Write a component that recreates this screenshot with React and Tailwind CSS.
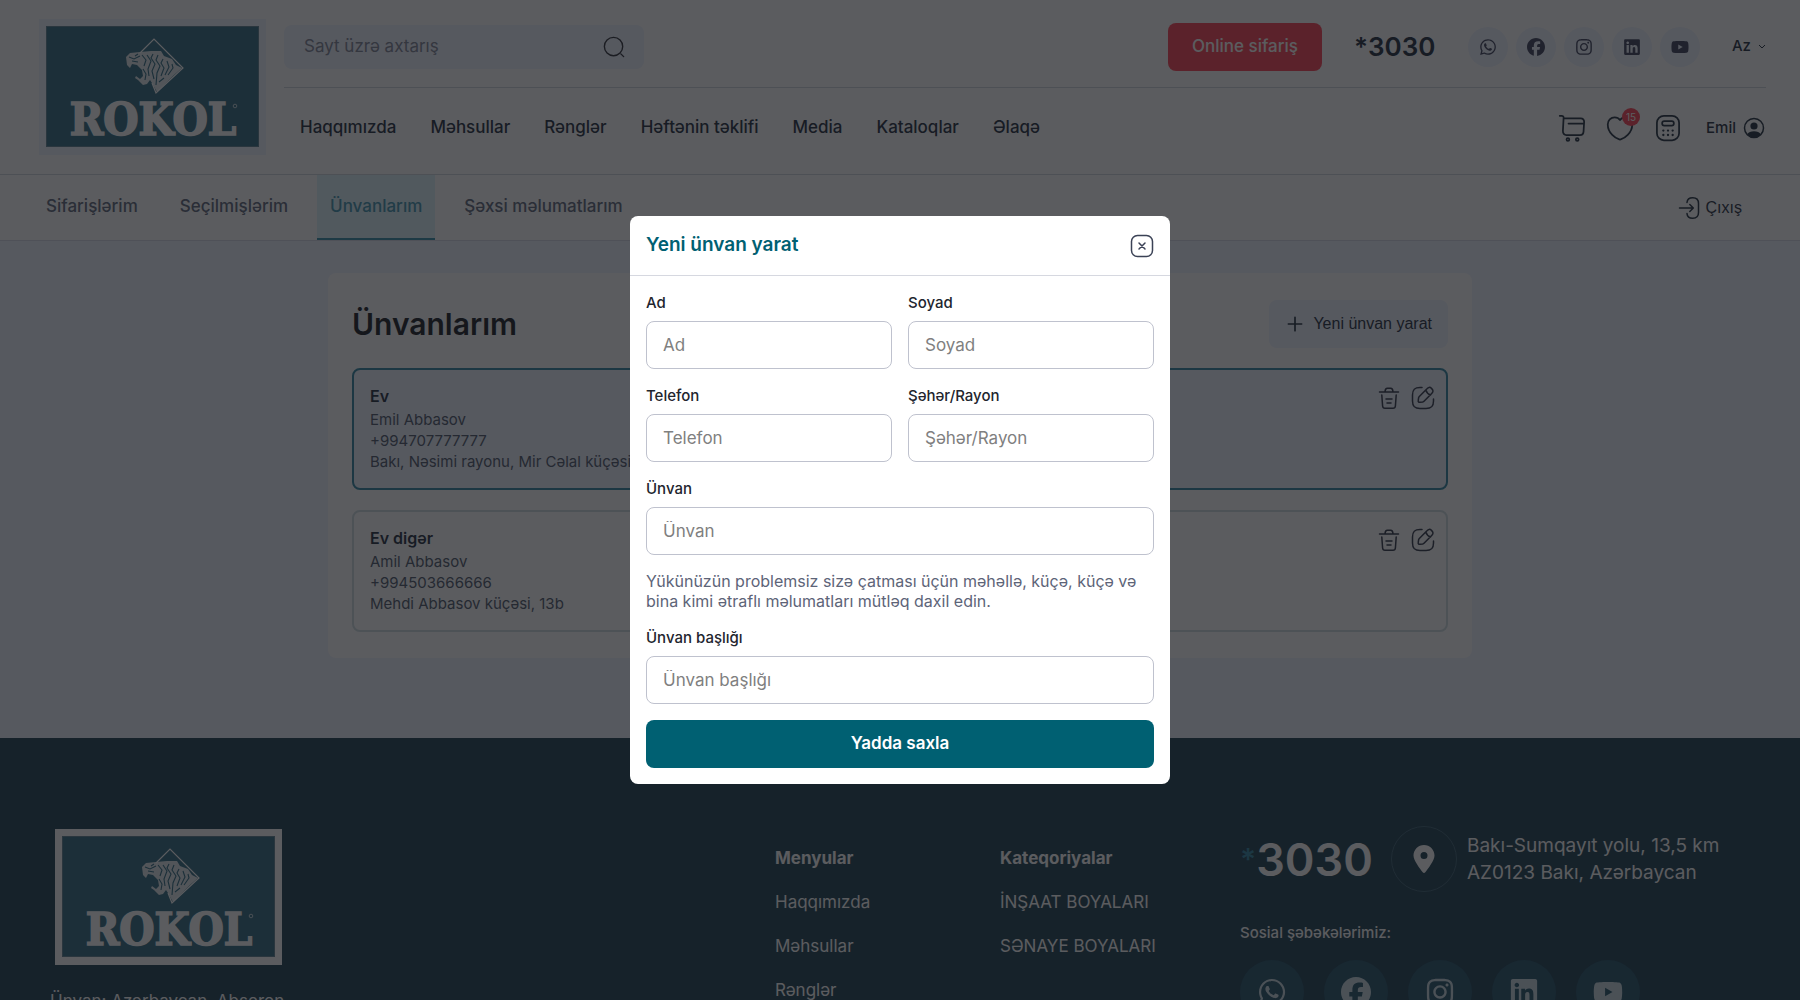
import { useState } from "react";
import { FaWhatsapp, FaFacebook, FaInstagram, FaLinkedin, FaYoutube, FaLocationDot } from "react-icons/fa6";

const navLinks = ["Haqqımızda", "Məhsullar", "Rənglər", "Həftənin təklifi", "Media", "Kataloqlar", "Əlaqə"];
const tabs = ["Sifarişlərim", "Seçilmişlərim", "Ünvanlarım", "Şəxsi məlumatlarım"];

const socials = [
  { name: "WhatsApp", Icon: FaWhatsapp },
  { name: "Facebook", Icon: FaFacebook },
  { name: "Instagram", Icon: FaInstagram },
  { name: "LinkedIn", Icon: FaLinkedin },
  { name: "YouTube", Icon: FaYoutube },
];

const addresses = [
  {
    id: 1,
    title: "Ev",
    name: "Emil Abbasov",
    phone: "+994707777777",
    address: "Bakı, Nəsimi rayonu, Mir Cəlal küçəsi",
    selected: true,
  },
  {
    id: 2,
    title: "Ev digər",
    name: "Amil Abbasov",
    phone: "+994503666666",
    address: "Mehdi Abbasov küçəsi, 13b",
    selected: false,
  },
];

function Logo({ frame }) {
  return (
    <svg viewBox="0 0 227 136" className="block w-[227px] h-[136px]" role="img" aria-label="Rokol">
      <rect width="227" height="136" fill={frame} />
      <rect x="7.5" y="7.5" width="212" height="120" fill="#2c687f" stroke="#5b7f92" />
      <path d="M101 34 L115 20 L144 49 L117 74 L113 64" fill="none" stroke="#fff" strokeWidth="1.2" />
      <path
        d="M87 38 L91 34 L101 33 L112 32 L122 32 L125 37 L133 40 L137 46 L143 49 L135 56 L127 64 L118 73 L113 64 L111 61 L108 65 L104 66 L99 61 L96 59 L97 57 L101 60 L104 57 L103 51 L98 46 L93 45 L91 49 L88 46 Z"
        fill="#fff"
        fillOpacity="0.85"
      />
      <path
        d="M90 38 L95 40 L101 37 M93 42 L99 43 M103 36 L107 41 L105 47 M108 36 L112 42 L109 50 L110 57 M114 35 L112 39 L116 45 L113 52 L115 60 M119 36 L117 41 L121 47 L118 54 L117 66 M124 40 L122 44 L125 49 L122 57 M128 42 L130 48 L126 56 M133 45 L134 49 L129 56 M120 63 L125 59 M104 50 L107 55 L106 61 M96 37 L99 35"
        fill="none"
        stroke="#2c687f"
        strokeWidth="1.1"
      />
      <text
        x="114"
        y="116"
        textAnchor="middle"
        fill="#fff"
        stroke="#fff"
        strokeWidth="1.6"
        fontSize="45"
        fontWeight="700"
        fontFamily='"DejaVu Serif Condensed", "DejaVu Serif", serif'
      >
        ROKOL
      </text>
      <circle cx="196" cy="87" r="1.8" fill="none" stroke="#fff" strokeWidth="0.7" />
    </svg>
  );
}

function Icon({ size = 24, children, width = 1.5 }) {
  return (
    <svg
      width={size}
      height={size}
      viewBox="0 0 24 24"
      fill="none"
      stroke="currentColor"
      strokeWidth={width}
      strokeLinecap="round"
      strokeLinejoin="round"
      aria-hidden="true"
    >
      {children}
    </svg>
  );
}

function CartIcon() {
  return (
    <Icon size={28}>
      <path d="M1.500 1.500h1.700c1 0 1.700.8 1.600 1.800L4.200 14.500c-.1 2 1.100 3.500 3 3.500h11.600c1.700 0 3-1.200 3.100-2.900l.5-8.200c.1-1.800-1.100-3.200-2.900-3.200H4.800M9 8.200h13" />
      <circle cx="8.500" cy="21.800" r="1.200" />
      <circle cx="16.500" cy="21.800" r="1.200" />
    </Icon>
  );
}

function HeartIcon() {
  return (
    <Icon size={28}>
      <path d="M12.600 21.800c-.3.100-.9.100-1.200 0C8.500 20.800 1.500 16.500 1.500 8.900 1.500 5.500 4.100 2.800 7.400 2.800c1.900 0 3.600.9 4.600 2.400 1-1.500 2.700-2.400 4.600-2.400 3.300 0 5.900 2.700 5.900 6.100 0 7.600-7 11.900-9.900 12.900z" />
    </Icon>
  );
}

function CalculatorIcon() {
  return (
    <Icon size={28}>
      <rect x="2.500" y="1.500" width="19" height="21" rx="6" />
      <rect x="7" y="6" width="10" height="4" rx="1.800" />
      <path d="M8 14.200h.01M12 14.200h.01M16 14.200h.01M8 18h.01M12 18h.01M16 18h.01" strokeWidth="2" />
    </Icon>
  );
}

function UserIcon() {
  return (
    <Icon size={24}>
      <circle cx="12" cy="12" r="9.500" />
      <circle cx="12" cy="10" r="3.600" fill="currentColor" stroke="none" />
      <path d="M5 18.500c1.300-2.300 4-3.200 7-3.200s5.700.9 7 3.200c-1.800 1.900-4.300 3-7 3s-5.200-1.100-7-3z" fill="currentColor" stroke="none" />
    </Icon>
  );
}

function TrashIcon() {
  return (
    <Icon>
      <path d="M2.500 6h19M8 5.700c.2-2.700.8-3.500 2.300-3.500h3.400c1.500 0 2.100.8 2.300 3.500M4.800 9l.8 11c.1 1.600.9 2.300 2.400 2.300h8c1.500 0 2.300-.7 2.400-2.300l.8-11M9 13h6M10 17h4" />
    </Icon>
  );
}

function EditIcon() {
  return (
    <Icon>
      <path d="M11 1.500H9c-5.500 0-7.500 2-7.500 7.500v6c0 5.500 2 7.500 7.500 7.500h6c5.500 0 7.500-2 7.500-7.500v-2" />
      <path d="M16 2.800 8.300 10.500c-.3.300-.6.900-.7 1.300l-.4 2.900c-.2 1.100.6 1.800 1.600 1.600l2.900-.4c.4-.1 1-.4 1.300-.7l7.700-7.700c1.400-1.400 2-2.900 0-4.900s-3.400-1.300-4.700.2zM14.900 4.200c.7 2.300 2.400 4 4.700 4.700" />
    </Icon>
  );
}

function Header() {
  return (
    <header className="flex gap-[18px] pl-[39px] pr-[34px] h-[175px] bg-white border-b border-[#d0d8dc]">
      <a href="#" className="mt-[19px] shrink-0">
        <Logo frame="#eef3ff" />
      </a>
      <div className="flex-1 flex flex-col">
        <div className="flex items-center justify-between h-[88px] border-b border-[#d0d8dc]">
          <form className="flex items-center w-[360px] h-11 mt-1.5 pl-5 pr-[19px] rounded-lg bg-[#eef3ff]">
            <input
              type="search"
              aria-label="Sayt üzrə axtarış"
              placeholder="Sayt üzrə axtarış"
              className="flex-1 bg-transparent text-[17px] outline-none placeholder:text-[#7d8294]"
            />
            <button type="button" aria-label="Axtar" className="text-[#2a2c34]">
              <Icon size={22}>
                <circle cx="11.500" cy="11.500" r="10" />
                <path d="M19.500 19.500l3 3" />
              </Icon>
            </button>
          </form>
          <div className="flex items-center mt-1.5">
            <button className="h-12 w-[154px] rounded-lg bg-[#fe3f50] text-[17px] font-medium text-white">
              Online sifariş
            </button>
            <a href="tel:*3030" className="ml-8 w-[82px] text-[26px] font-semibold text-[#1c2b3a]">
              *3030
            </a>
            <ul className="flex gap-2 ml-8">
              {socials.map(({ name, Icon: SocialIcon }) => (
                <li key={name}>
                  <a href="#" aria-label={name} className="flex items-center justify-center size-10 rounded-full bg-[#eef3ff] text-[#3a3f58]">
                    <SocialIcon size={18} />
                  </a>
                </li>
              ))}
            </ul>
            <button className="flex items-center gap-[7px] ml-8 text-[15px] font-medium text-[#1c2b3a]">
              Az
              <svg width="8" height="6" viewBox="0 0 8 6" fill="none" stroke="currentColor" aria-hidden="true">
                <path d="M1 1l3 3 3-3" />
              </svg>
            </button>
          </div>
        </div>
        <div className="flex items-center justify-between pl-4 h-[80px]">
          <nav className="flex gap-[34px] text-[17px] font-medium text-[#1c2b3a]">
            {navLinks.map((link) => (
              <a key={link} href="#">{link}</a>
            ))}
          </nav>
          <div className="flex items-center gap-5 text-[#1c2b3a]">
            <a href="#" aria-label="Səbət"><CartIcon /></a>
            <a href="#" aria-label="Seçilmişlər" className="relative">
              <HeartIcon />
              <span className="absolute -top-1.5 -right-1.5 flex items-center justify-center size-[18px] rounded-full bg-[#fe3f50] text-[10px] text-white">
                15
              </span>
            </a>
            <a href="#" aria-label="Kalkulyator"><CalculatorIcon /></a>
            <a href="#" className="flex items-center gap-1.5 ml-1 text-[15px] font-medium">
              Emil
              <UserIcon />
            </a>
          </div>
        </div>
      </div>
    </header>
  );
}

function AccountTabs() {
  return (
    <div className="flex justify-between h-[66px] pl-[33px] pr-[58px] bg-white border-b border-[#d5dbe8] text-[17px] font-medium">
      <nav className="flex gap-4">
        {tabs.map((tab) => (
          <a
            key={tab}
            href="#"
            className={
              tab === "Ünvanlarım"
                ? "flex items-center px-[13px] border-b-2 border-[#2f8ca8] bg-[#dcf3fa] text-[#3d93b0]"
                : "flex items-center px-[13px] border-b-2 border-transparent text-[#5a6478]"
            }
          >
            {tab}
          </a>
        ))}
      </nav>
      <button className="flex items-center gap-1 font-[Liberation_Sans] text-base font-normal text-[#1c2b3a]">
        <Icon size={24}>
          <path d="M9 6.500c.3-3.500 2-4.800 5.600-4.800h.2c4 0 5.700 1.600 5.700 5.700v9.200c0 4.100-1.700 5.700-5.700 5.700h-.2c-3.600 0-5.300-1.300-5.600-4.700M1.500 12h13M11.800 8.500l3.500 3.500-3.500 3.500" />
        </Icon>
        Çıxış
      </button>
    </div>
  );
}

function AddressCard({ item }) {
  return (
    <li
      className={
        item.selected
          ? "flex justify-between items-start p-4 pr-[11px] rounded-lg border-2 border-[#2c84a0] bg-[#eef3ff]"
          : "flex justify-between items-start p-4 pr-[11px] rounded-lg border-2 border-[#cfdde2] bg-white"
      }
    >
      <div className="text-[15px] leading-[21px] text-[#4a5568]">
        <h2 className="mb-[3px] text-base leading-5 font-semibold text-[#1c2b3a]">{item.title}</h2>
        <p>{item.name}</p>
        <p>{item.phone}</p>
        <p>{item.address}</p>
      </div>
      <div className="flex gap-2.5 text-[#2c3244]">
        <button aria-label="Sil"><TrashIcon /></button>
        <button aria-label="Düzəliş et"><EditIcon /></button>
      </div>
    </li>
  );
}

function Footer() {
  return (
    <footer className="flex min-h-[420px] pt-[88px] pl-[50px] pr-10 bg-[#183c4d] text-white">
      <div className="flex-1">
        <div className="pt-[3px] pl-[5px]">
          <Logo frame="#ffffff" />
        </div>
        <p className="mt-6 w-[260px] text-[17px] leading-6">Ünvan: Azərbaycan, Abşeron rayonu</p>
      </div>
      <nav className="flex flex-col gap-5 w-[225px] pt-5 text-[17px] leading-6">
        <h3 className="font-bold">Menyular</h3>
        <a href="#">Haqqımızda</a>
        <a href="#">Məhsullar</a>
        <a href="#">Rənglər</a>
      </nav>
      <nav className="flex flex-col gap-5 w-[240px] pt-5 text-[17px] leading-6">
        <h3 className="font-bold">Kateqoriyalar</h3>
        <a href="#">İNŞAAT BOYALARI</a>
        <a href="#">SƏNAYE BOYALARI</a>
      </nav>
      <div className="w-[520px]">
        <div className="flex items-center h-[66px]">
          <a href="tel:*3030" className="flex items-center w-[151px] text-[45px] leading-none font-semibold">
            <span className="text-[30px] font-semibold text-[#2c84a0]">*</span>3030
          </a>
          <div className="flex items-center justify-center size-[66px] rounded-full border border-[#3a6072]">
            <FaLocationDot size={28} />
          </div>
          <p className="ml-2.5 text-[19px] leading-[27px]">
            Bakı-Sumqayıt yolu, 13,5 km
            <br />
            AZ0123 Bakı, Azərbaycan
          </p>
        </div>
        <p className="mt-[30px] text-[15px] leading-[22px] font-medium">Sosial şəbəkələrimiz:</p>
        <ul className="flex gap-5 mt-4">
          {socials.map(({ name, Icon: SocialIcon }) => (
            <li key={name}>
              <a href="#" aria-label={name} className="flex items-center justify-center size-16 rounded-full bg-[#1f5066] text-[#c9dbe2]">
                <SocialIcon size={30} />
              </a>
            </li>
          ))}
        </ul>
      </div>
    </footer>
  );
}

function Field({ id, label, className }) {
  return (
    <div className={className}>
      <label htmlFor={id} className="block mb-2 text-[15px] leading-[21px] font-medium text-[#22252e]">
        {label}
      </label>
      <input
        id={id}
        type="text"
        placeholder={label}
        className="block w-full h-12 px-4 rounded-lg border border-[#bfc2ce] text-[17px] outline-none placeholder:text-[#808080]"
      />
    </div>
  );
}

function AddressModal({ onClose }) {
  return (
    <div className="fixed inset-0 z-10 flex items-center justify-center bg-[#15171b]/70">
      <div role="dialog" aria-modal="true" aria-labelledby="modal-title" className="w-full max-w-[540px] rounded-lg bg-white">
        <div className="flex items-center justify-between h-[60px] px-4 border-b border-[#d6d8e0]">
          <h2 id="modal-title" className="text-[19px] font-semibold text-[#006072]">Yeni ünvan yarat</h2>
          <button aria-label="Bağla" onClick={onClose} className="text-[#3b4256]">
            <Icon size={24}>
              <rect x="1.500" y="1.500" width="21" height="21" rx="6" />
              <path d="M9 9l6 6M15 9l-6 6" />
            </Icon>
          </button>
        </div>
        <form className="grid grid-cols-2 gap-4 p-4" onSubmit={(e) => e.preventDefault()}>
          <Field id="name" label="Ad" />
          <Field id="surname" label="Soyad" />
          <Field id="phone" label="Telefon" />
          <Field id="city" label="Şəhər/Rayon" />
          <Field id="address" label="Ünvan" className="col-span-2" />
          <p className="col-span-2 text-base leading-5 text-[#5d6478]">
            Yükünüzün problemsiz sizə çatması üçün məhəllə, küçə, küçə və bina kimi ətraflı məlumatları mütləq daxil edin.
          </p>
          <Field id="title" label="Ünvan başlığı" className="col-span-2" />
          <button type="submit" className="col-span-2 h-12 rounded-lg bg-[#006072] text-[17px] font-semibold text-white">
            Yadda saxla
          </button>
        </form>
      </div>
    </div>
  );
}

export default function App() {
  const [open, setOpen] = useState(true);

  return (
    <div className={open ? "h-screen overflow-hidden bg-[#eef3ff] font-[Inter,sans-serif]" : "bg-[#eef3ff] font-[Inter,sans-serif]"}>
      <Header />
      <AccountTabs />
      <main className="px-8 pt-8 pb-20">
        <section className="max-w-[1144px] mx-auto px-6 pt-[27px] pb-[26px] rounded-lg bg-white">
          <div className="flex items-center justify-between mb-5">
            <h1 className="text-[30px] font-semibold text-[#14181f]">Ünvanlarım</h1>
            <button
              onClick={() => setOpen(true)}
              className="flex items-center gap-2 h-12 px-4 rounded-lg bg-[#eef3ff] font-[Liberation_Sans] text-base text-[#1c2b3a]"
            >
              <Icon size={20} width={2}>
                <path d="M12 4v16M4 12h16" />
              </Icon>
              Yeni ünvan yarat
            </button>
          </div>
          <ul className="flex flex-col gap-5">
            {addresses.map((item) => (
              <AddressCard key={item.id} item={item} />
            ))}
          </ul>
        </section>
      </main>
      <Footer />
      {open && <AddressModal onClose={() => setOpen(false)} />}
    </div>
  );
}
